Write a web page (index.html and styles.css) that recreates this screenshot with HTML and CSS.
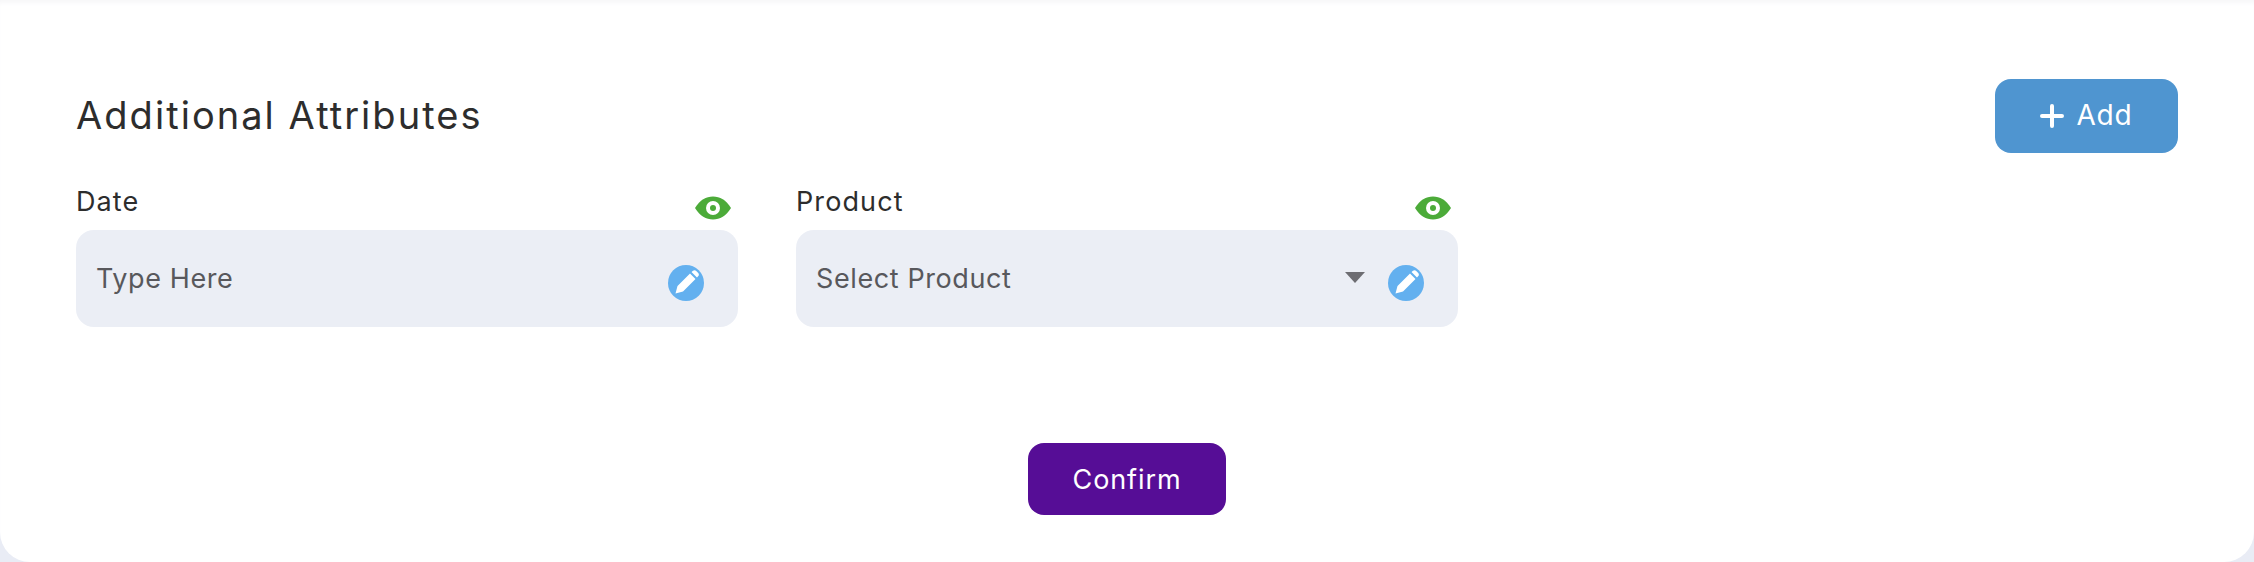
FILE: index.html
```html
<!DOCTYPE html>
<html lang="en">
<head>
<meta charset="utf-8">
<title>Additional Attributes</title>
<link rel="stylesheet" href="styles.css">
</head>
<body>
<main class="card">
  <header class="head">
    <h2 class="title">Additional Attributes</h2>
    <button class="btn-add" type="button">
      <svg class="plus" viewBox="0 0 24 24"><path d="M12 2v20M2 12h20"/></svg>
      <span>Add</span>
    </button>
  </header>
  <section class="fields">
    <div class="field">
      <div class="label-row">
        <label class="label">Date</label>
        <svg class="eye" viewBox="0 0 36 24"><path class="eye-body" d="M0 12C5 4 11 0.500 18 0.500S31 4 36 12C31 20 25 23.500 18 23.500S5 20 0 12Z"/><circle class="eye-ring" cx="18" cy="12" r="7"/><circle class="eye-body" cx="18" cy="12" r="3"/></svg>
      </div>
      <div class="input">
        <span class="placeholder">Type Here</span>
        <svg class="pen" viewBox="0 0 36 36"><circle class="pen-bg" cx="18" cy="18" r="18"/><path class="pen-fg" d="M7.500 28.500l2-7.500L22 8.500l5.500 5.500L15 26.500zM23.500 7l1.500-1.200c1-.8 2.300-.8 3.200.1l2 2c.9.900.9 2.200.1 3.200L29 12.500z"/></svg>
      </div>
    </div>
    <div class="field">
      <div class="label-row">
        <label class="label">Product</label>
        <svg class="eye" viewBox="0 0 36 24"><path class="eye-body" d="M0 12C5 4 11 0.500 18 0.500S31 4 36 12C31 20 25 23.500 18 23.500S5 20 0 12Z"/><circle class="eye-ring" cx="18" cy="12" r="7"/><circle class="eye-body" cx="18" cy="12" r="3"/></svg>
      </div>
      <div class="input">
        <span class="placeholder">Select Product</span>
        <span class="caret"></span>
        <svg class="pen" viewBox="0 0 36 36"><circle class="pen-bg" cx="18" cy="18" r="18"/><path class="pen-fg" d="M7.500 28.500l2-7.500L22 8.500l5.500 5.500L15 26.500zM23.500 7l1.500-1.200c1-.8 2.300-.8 3.200.1l2 2c.9.900.9 2.200.1 3.200L29 12.500z"/></svg>
      </div>
    </div>
  </section>
  <footer class="foot">
    <button class="btn-confirm" type="button">Confirm</button>
  </footer>
</main>
</body>
</html>
```
FILE: styles.css
```css
* { box-sizing: border-box; }
html, body { margin: 0; height: 562px; overflow: hidden; background: #e9ecf5; }
body { font-family: "Inter", "Liberation Sans", sans-serif; }
.card {
  height: 562px;
  background: #fff;
  border-radius: 0 0 30px 30px;
  padding: 79px 76px 47px;
  display: flex;
  flex-direction: column;
  box-shadow: inset 0 5px 4px -2px #f7f7f9;
}
.head { display: flex; justify-content: space-between; align-items: center; height: 74px; }
.title { margin: -2px 0 0; font-size: 38px; font-weight: 400; color: #2d2d2d; letter-spacing: 2.05px; }
.btn-add {
  width: 183px; height: 74px;
  border: 0; border-radius: 16px;
  background: #4f95d0; color: #fff;
  font: 400 28px "Inter", sans-serif;
  letter-spacing: 0.8px;
  display: flex; align-items: center; justify-content: center; gap: 12px;
}
.btn-add span { margin-top: -3px; }
.plus { width: 24px; height: 24px; fill: none; stroke: #fff; stroke-width: 4; stroke-linecap: round; }
.fields { display: flex; gap: 58px; margin-top: 32px; }
.field { width: 662px; }
.label-row { display: flex; justify-content: space-between; align-items: flex-end; height: 45px; padding-right: 7px; padding-bottom: 10px; }
.label { font-size: 27px; line-height: 32px; color: #2d2d2d; letter-spacing: 1.1px; align-self: flex-start; margin-top: 1px; }
.eye { width: 36px; height: 24px; }
.eye-body { fill: #4cab39; }
.eye-ring { fill: #fff; }
.input {
  height: 97px;
  background: #ebeef5;
  border-radius: 18px;
  padding: 0 34px 0 20px;
  display: flex; align-items: center;
}
.placeholder { flex: 1; font-size: 27px; color: #58585c; letter-spacing: 0.6px; }
.caret { width: 0; height: 0; border-left: 10px solid transparent; border-right: 10px solid transparent; border-top: 11px solid #6d6d72; margin-right: 23px; margin-top: -3px; }
.pen { width: 36px; height: 36px; margin-top: 8px; }
.pen-bg { fill: #63b0ef; }
.pen-fg { fill: #fff; }
.foot { margin-top: auto; display: flex; justify-content: center; }
.btn-confirm {
  width: 198px; height: 72px;
  border: 0; border-radius: 16px;
  background: #560d96; color: #fff;
  font: 400 27px "Inter", sans-serif;
  letter-spacing: 0.9px;
}
```
